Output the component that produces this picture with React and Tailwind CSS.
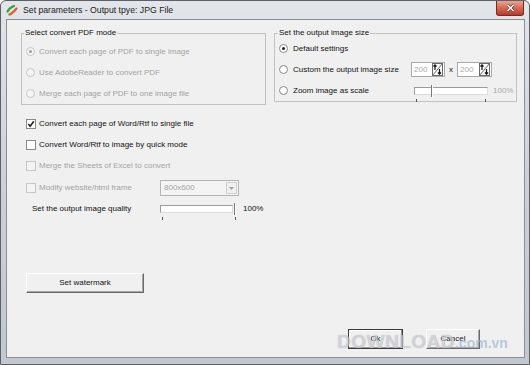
import React from "react";

function Radio({ checked, disabled }) {
  return (
    <span
      className={`flex h-[9px] w-[9px] shrink-0 items-center justify-center rounded-full border ${
        disabled ? "border-[#c6c6c6] bg-[#f5f5f5]" : "border-[#8a8a8a] bg-white"
      }`}
    >
      {checked && (
        <span className={`h-[3px] w-[3px] rounded-full ${disabled ? "bg-[#a0a0a0]" : "bg-[#1e1e1e]"}`} />
      )}
    </span>
  );
}

function Check({ checked, disabled }) {
  return (
    <span
      className={`flex h-[10px] w-[10px] shrink-0 items-center justify-center border ${
        disabled ? "border-[#c6c6c6] bg-[#f4f4f4]" : "border-[#8a8a8a] bg-white"
      }`}
    >
      {checked && (
        <svg width="8" height="8" viewBox="0 0 8 8">
          <path d="M1.3 4 L3.2 6.2 L6.8 1.3" fill="none" stroke="#1e1e1e" strokeWidth="1.5" />
        </svg>
      )}
    </span>
  );
}

function SpinIcon() {
  return (
    <svg width="11" height="13" viewBox="0 0 11 13" className="shrink-0">
      <rect x="0.5" y="0.5" width="10" height="12" fill="#fafafa" stroke="#6a6a6a" />
      <path d="M0.5 12.5 L10.5 0.5" stroke="#6a6a6a" />
      <path d="M3 7 V2 M1.5 3.5 L3 1.8 L4.5 3.5" fill="none" stroke="#111" strokeWidth="1.2" />
      <path d="M7.5 6 V11 M6 9.5 L7.5 11.2 L9 9.5" fill="none" stroke="#111" strokeWidth="1.2" />
    </svg>
  );
}

function SpinBox({ w }) {
  return (
    <div className={`flex h-[15px] shrink-0 items-center border border-[#a9a9a9] bg-white pl-[2px] pr-[1px] ${w}`}>
      <span className="flex-1 text-[#a8a8a8]">200</span>
      <SpinIcon />
    </div>
  );
}

function Slider({ width, track, thumb, tickRight }) {
  return (
    <div className={`relative h-[8px] shrink-0 ${width}`}>
      <div className={`h-[8px] border border-[#9c9c9c] border-b-[#dcdcdc] border-r-[#dcdcdc] bg-white ${track}`} />
      <div className={`absolute top-[-2px] h-[12px] w-[2px] border-l border-[#7a7a7a] bg-white ${thumb}`} />
      <div className="absolute left-[2px] top-[12px] h-[3px] w-px bg-[#555]" />
      <div className={`absolute top-[12px] h-[3px] w-px bg-[#555] ${tickRight}`} />
    </div>
  );
}

export default function App() {
  return (
    <div className="relative h-[365px] w-[530px] overflow-hidden bg-white font-['Liberation_Sans',Arial,sans-serif] text-[8px] leading-none text-[#111]">
      <div className="flex h-[365px] w-[530px] flex-col rounded-t-[6px] border border-[#5d6166] bg-gradient-to-b from-[#e2e5e9] via-[#cdd1d6] to-[#c3c8ce]">
        {/* title bar */}
        <div className="flex h-[18px] shrink-0 items-center pl-[5px]">
          <svg width="12" height="12" viewBox="0 0 12 12" className="shrink-0">
            <path d="M1.5 7.5 C3 4.5 5 3 8 2" fill="none" stroke="#35a63a" strokeWidth="2.2" strokeLinecap="round" />
            <path d="M3.5 10.5 C6 9.5 8 7.5 10.5 4.5" fill="none" stroke="#e5582b" strokeWidth="2.2" strokeLinecap="round" />
          </svg>
          <span className="ml-[5px] text-[8.7px] text-[#1a1a1a]">Set parameters - Output tpye: JPG File</span>
          <div className="mr-[5px] ml-auto flex h-[15px] w-[28px] self-start items-center justify-center rounded-b-[3px] border border-t-0 border-[#7d2a1e] bg-gradient-to-b from-[#e8a597] via-[#d46a56] to-[#b8382a]">
            <svg width="9" height="8" viewBox="0 0 9 8">
              <path d="M1.5 1 L7.5 7 M7.5 1 L1.5 7" stroke="#5a1a12" strokeWidth="2.6" />
              <path d="M1.5 1 L7.5 7 M7.5 1 L1.5 7" stroke="#fff" strokeWidth="1.6" />
            </svg>
          </div>
        </div>

        {/* client area */}
        <div className="relative mb-[6px] ml-[5px] mr-[4px] flex flex-1 flex-col border border-[#8b8f94] bg-[#f0f0f0] pt-[8px]">
          <div className="flex items-start">
            <fieldset className="ml-[14px] w-[245px] border border-[#c2c2c2]">
              <legend className="ml-[2px] h-[10px] px-[1px] leading-[10px]">Select convert PDF mode</legend>
              <div className="flex flex-col pl-[4px] pt-[3px] text-[#a3a3a3]">
                <div className="flex h-[21px] items-center gap-[4px]">
                  <Radio checked disabled />
                  <span>Convert each page of PDF to single image</span>
                </div>
                <div className="flex h-[21px] items-center gap-[4px]">
                  <Radio disabled />
                  <span>Use AdobeReader to convert PDF</span>
                </div>
                <div className="flex h-[21px] items-center gap-[4px]">
                  <Radio disabled />
                  <span>Merge each page of PDF to one image file</span>
                </div>
              </div>
            </fieldset>

            <fieldset className="ml-[8px] w-[243px] border border-[#c2c2c2]">
              <legend className="ml-[3px] h-[10px] px-[1px] leading-[10px]">Set the output image size</legend>
              <div className="flex flex-col pl-[4px]">
                <div className="flex h-[21px] items-center">
                  <Radio checked />
                  <span className="ml-[5px]">Default settings</span>
                </div>
                <div className="flex h-[21px] items-center">
                  <Radio />
                  <span className="ml-[5px] w-[118px]">Custom the output image size</span>
                  <SpinBox w="w-[34px]" />
                  <span className="mx-[4px]">x</span>
                  <SpinBox w="w-[35px]" />
                </div>
                <div className="flex h-[21px] items-center">
                  <Radio />
                  <span className="ml-[5px] w-[118px]">Zoom image as scale</span>
                  <Slider width="ml-[3px] w-[74px]" track="w-[74px]" thumb="left-[17px]" tickRight="left-[71px]" />
                  <span className="ml-[5px] text-[#a8a8a8]">100%</span>
                </div>
              </div>
            </fieldset>
          </div>

          <div className="mt-[8px] flex flex-col pl-[19px]">
            <div className="flex h-[21px] items-center gap-[3px]">
              <Check checked />
              <span>Convert each page of Word/Rtf to single file</span>
            </div>
            <div className="flex h-[21px] items-center gap-[3px]">
              <Check />
              <span>Convert Word/Rtf to image by quick mode</span>
            </div>
            <div className="flex h-[22px] items-center gap-[3px] text-[#a3a3a3]">
              <Check disabled />
              <span>Merge the Sheets of Excel to convert</span>
            </div>
            <div className="flex h-[22px] items-center gap-[3px] text-[#a3a3a3]">
              <Check disabled />
              <span className="w-[118px]">Modify website/html frame</span>
              <div className="flex h-[16px] w-[79px] items-center border border-[#b4b4b4] bg-[#f4f4f4] pl-[3px] pr-[1px]">
                <span className="flex-1">800x600</span>
                <div className="flex h-[12px] w-[11px] items-center justify-center border border-[#cfcfcf] bg-[#f0f0f0]">
                  <svg width="5" height="3" viewBox="0 0 5 3">
                    <path d="M0 0 H5 L2.5 3 Z" fill="#a0a0a0" />
                  </svg>
                </div>
              </div>
            </div>
          </div>

          <div className="mt-[1px] flex h-[18px] items-center pl-[25px]">
            <span className="w-[128px]">Set the output image quality</span>
            <Slider width="w-[76px]" track="w-[73px]" thumb="left-[74px]" tickRight="left-[75px]" />
            <span className="ml-[7px]">100%</span>
          </div>

          <div className="ml-[19px] mt-[55px] flex h-[20px] w-[118px] items-center justify-center border border-b-[#6a6a6a] border-l-[#fdfdfd] border-r-[#6a6a6a] border-t-[#fdfdfd] bg-[#f0f0f0] shadow-[inset_-1px_-1px_0_#a5a5a5]">
            Set watermark
          </div>

          <div className="mt-[36px] flex justify-end gap-[23px] pr-[44px]">
            <div className="flex h-[20px] w-[55px] items-center justify-center border border-[#3a3a3a] bg-[#f0f0f0] shadow-[inset_-1px_-1px_0_#9a9a9a,inset_1px_1px_0_#fff]">
              Ok
            </div>
            <div className="flex h-[20px] w-[54px] items-center justify-center border border-b-[#6a6a6a] border-l-[#fdfdfd] border-r-[#6a6a6a] border-t-[#fdfdfd] bg-[#f0f0f0] shadow-[inset_-1px_-1px_0_#a5a5a5]">
              Cancel
            </div>
          </div>

          {/* watermark of the screenshot source */}
          <div className="pointer-events-none absolute left-[330px] top-[312px] flex items-baseline font-bold opacity-70">
            <span className="text-[19px] leading-[19px] tracking-[0.5px] text-[#b9c9d9] [text-shadow:0_0_1px_#e8a070]">DOWNLOAD</span>
            <span className="text-[14px] leading-[14px] text-[#9fbad3]">.com.vn</span>
          </div>
        </div>
      </div>
    </div>
  );
}
